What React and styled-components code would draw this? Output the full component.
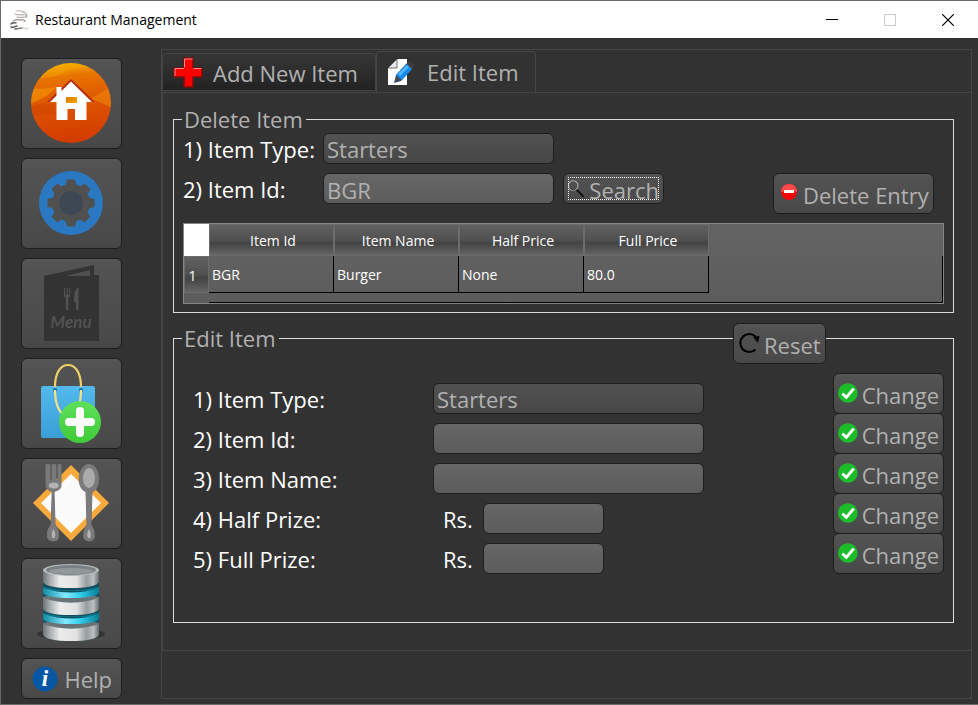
import React from 'react';
import styled, { createGlobalStyle, css } from 'styled-components';

const GlobalStyle = createGlobalStyle`
  * { box-sizing: border-box; }
  body { margin: 0; background: #323232; }
  button, input, select { font: inherit; color: inherit; }
`;

const raised = css`
  background: linear-gradient(#565656, #525252 10%, #4e4e4e 50%, #4a4a4a 90%, #464646);
  border: 1px solid #1e1e1e;
  border-radius: 6px;
`;

const AppWindow = styled.div`
  min-height: 100vh;
  display: flex;
  flex-direction: column;
  background: #323232;
  border: 1px solid #6a6a6a;
  border-right: 0;
  color: #b1b1b1;
  font: 22px/30px "Open Sans", "Noto Sans", sans-serif;
`;

const TitleBar = styled.header`
  height: 37px;
  flex: none;
  display: flex;
  align-items: center;
  padding: 0 1px 0 8px;
  background: #fff;
  color: #000;
`;

const Title = styled.h1`
  margin: 0 auto 0 4px;
  font-size: 14px;
  font-weight: 400;
  line-height: 20px;
`;

const WindowButton = styled.button`
  width: 58px;
  height: 36px;
  padding: 0;
  border: 0;
  background: none;
  display: grid;
  place-items: center;
`;

const Body = styled.div`
  flex: 1;
  display: flex;
  gap: 39px;
  padding: 11px 6px 5px 20px;
`;

const Sidebar = styled.nav`
  width: 101px;
  flex: none;
  display: flex;
  flex-direction: column;
  gap: 9px;
  padding-top: 9px;
`;

const NavButton = styled.button`
  ${raised}
  height: 91px;
  padding: 0 2px 2px 0;
  display: grid;
  place-items: center;
`;

const HelpButton = styled.button`
  ${raised}
  height: 41px;
  padding: 0 9px 0 10px;
  display: flex;
  align-items: center;
  justify-content: space-between;
  line-height: 38px;
`;

const HelpText = styled.span`
  padding-top: 1px;
`;

const Frame = styled.main`
  flex: 1;
  min-width: 0;
  border: 1px solid #444;
`;

const TabList = styled.div`
  display: flex;
  align-items: flex-end;
  height: 42px;
`;

const Tab = styled.button`
  height: ${p => (p.$active ? 41 : 38)}px;
  width: ${p => (p.$active ? 160 : 214)}px;
  margin-bottom: ${p => (p.$active ? 0 : 1)}px;
  padding: 0 0 0 ${p => (p.$active ? 10 : 9)}px;
  display: flex;
  align-items: center;
  gap: ${p => (p.$active ? 12 : 9)}px;
  border: 1px solid #444;
  border-bottom-width: ${p => (p.$active ? 0 : 1)}px;
  border-radius: 4px 4px 0 0;
  background: ${p => (p.$active ? '#323232' : 'linear-gradient(#343434, #323232 20%, #292929 70%, #212121)')};
  white-space: nowrap;
`;

const TabText = styled.span`
  padding-top: ${p => (p.$active ? 0 : 2)}px;
`;

const Pane = styled.section`
  border: 1px solid #444;
  border-right: 0;
  padding: 13px 17px 27px 10px;
  display: flex;
  flex-direction: column;
  gap: 12px;
`;

const Group = styled.fieldset`
  position: relative;
  min-width: 0;
  margin: 0;
  border: 1px solid #dcdcdc;
  padding: 0 9px ${p => (p.$roomy ? 49 : 8)}px;
`;

const Legend = styled.legend`
  margin: 0 0 0 -1px;
  padding: 0 3px 0 2px;
  line-height: 26px;
`;

const Lookup = styled.div`
  display: flex;
  align-items: flex-start;
  height: ${p => (p.$last ? 51 : 40)}px;
  padding-top: 1px;
`;

const Label = styled.label`
  width: ${p => (p.$wide ? 240 : 140)}px;
  flex: none;
  color: #fff;
  line-height: 32px;
  height: 31px;
  white-space: nowrap;
`;

const fieldBox = css`
  width: ${p => p.$width}px;
  height: 31px;
  border: 1px solid #1e1e1e;
  border-radius: 6px;
  line-height: 28px;
`;

const TextField = styled.input`
  ${fieldBox}
  padding: 2px 3px 0;
  background: linear-gradient(#666, #5c5c5c);
`;

const TypeSelect = styled.select`
  ${fieldBox}
  appearance: none;
  padding: 0 3px;
  background: linear-gradient(#525252, #464646);
  opacity: 1;
`;

const ActionButton = styled.button`
  ${raised}
  height: ${p => (p.$short ? 31 : 41)}px;
  width: ${p => p.$width}px;
  margin-left: ${p => (p.$push ? 'auto' : p.$near ? '9px' : 0)};
  margin-right: ${p => (p.$inset ? 10 : 0)}px;
  padding: 0 4px;
  display: flex;
  align-items: center;
  flex: none;
`;

const ActionBody = styled.span`
  flex: 1;
  min-width: 0;
  display: flex;
  align-items: center;
  gap: ${p => p.$gap || 4}px;
  overflow: hidden;
  white-space: nowrap;
  padding-left: ${p => p.$indent || 0}px;
  height: ${p => (p.$focused ? '23px' : '100%')};
  outline: ${p => (p.$focused ? '1px dotted #fff' : 'none')};
  outline-offset: -1px;
`;

const ActionText = styled.span`
  padding-top: 2px;
`;

const ResetSlot = styled.div`
  position: absolute;
  right: 127px;
  top: -28px;
`;

const EditRows = styled.div`
  margin-top: 22px;
  padding-left: 10px;
`;

const EditRow = styled.div`
  display: flex;
  height: 40px;
  align-items: flex-end;

  & > ${ActionButton}, & > ${Label}, & > input, & > select { margin-bottom: -1px; }
`;

const Currency = styled.span`
  width: 50px;
  padding-left: 10px;
  margin-bottom: -1px;
  height: 31px;
  line-height: 32px;
  color: #fff;
`;

const Results = styled.table`
  width: 100%;
  table-layout: fixed;
  border: 1px solid #85858a;
  border-spacing: 0;
  background: linear-gradient(#646464, #5c5c5c);
  color: #fff;
  font-size: 14px;
  line-height: 20px;
`;

const Col = styled.col`
  width: ${p => (p.$width ? p.$width + 'px' : 'auto')};
`;

const headFill = 'linear-gradient(#616161, #505050 50%, #434343 60%, #656565)';

const ColumnHead = styled.th`
  height: 32px;
  padding: 2px 0 0 3px;
  font-weight: 400;
  background: ${headFill};
  border: 1px solid #6c6c6c;
`;

const Corner = styled.td`
  padding: 0;
  background: #fff;
`;

const Blank = styled.td`
  padding: 0;
  border-right: ${p => (p.$edge ? '1px solid #000' : 0)};
  border-bottom: ${p => (p.$floor ? '1px solid #000' : 0)};
  height: ${p => (p.$floor ? 10 : 32)}px;
`;

const RowHead = styled.th`
  height: 37px;
  padding: 2px 8px 0 0;
  font-weight: 400;
  background: ${headFill};
  border: 1px solid #6c6c6c;
`;

const Cell = styled.td`
  height: 37px;
  padding: 2px 3px 0;
  border-right: 1px solid #000;
  border-bottom: 1px solid #000;
`;

/* ---------- icons ---------- */

const Logo = () => (
  <svg width="22" height="22" viewBox="0 0 22 22" fill="none" stroke="#5a544e" strokeLinecap="round" aria-hidden="true">
    <path d="M7 2c3-1 7 0 9 2M13 3c4-1 6 2 4 5" strokeWidth="1" stroke="#b9b4ae" />
    <path d="M6 5c4 2 8 0 12 1M8 8c3 1 7 0 10 0" strokeWidth="1" stroke="#a29d97" />
    <path d="M4 12c2-2 6-1 9-1 3-1 4 1 2 2" strokeWidth="1" stroke="#77716b" />
    <path d="M2 15c2-2 4-1 5-1M2 18c3 1 4-1 6-1M6 20c3 0 5-1 7-1" strokeWidth="1.400" />
    <path d="M9 19c3-1 6 0 10 1" stroke="#c8c4c0" />
  </svg>
);

const HomeIcon = () => (
  <svg width="82" height="82" viewBox="0 0 82 82" aria-hidden="true">
    <defs>
      <linearGradient id="homeBg" x1="0.4" y1="0" x2="0.5" y2="1">
        <stop offset="0" stopColor="#f6b800" />
        <stop offset="0.16" stopColor="#e87500" />
        <stop offset="0.5" stopColor="#dd5500" />
        <stop offset="1" stopColor="#d23a00" />
      </linearGradient>
      <linearGradient id="homeWin" x1="0" y1="0" x2="1" y2="1">
        <stop offset="0" stopColor="#dc7800" />
        <stop offset="1" stopColor="#f7a800" />
      </linearGradient>
      <clipPath id="homeClip"><circle cx="41" cy="41" r="40" /></clipPath>
    </defs>
    <circle cx="41" cy="41" r="40" fill="url(#homeBg)" />
    <g clipPath="url(#homeClip)">
      <path d="M6 16q20 1 32-8 10-4 24-3l-14-6H20z" fill="#f5a300" opacity=".45" />
      <path d="M0 26q14 2 26-1-6 9-26 17z" fill="#f39200" opacity=".65" />
      <path d="M60 37l24-14v24q-13-7-24-10z" fill="#f0900a" opacity=".5" />
      <path d="M0 45q14-6 25-2v9q-14 0-25 3z" fill="#c73b00" opacity=".35" />
    </g>
    <path d="M41 17l24 23h-5L41 22 22 40h-5l10-10z" fill="#b52c04" />
    <path d="M41 19.500L62 40h-5.500v18H45V47h-7.500v11h-11V40H20l6.500-6.500V25h5v4z" fill="#fff" />
    <rect x="36" y="35" width="11" height="6" fill="url(#homeWin)" />
  </svg>
);

const teeth = [0, 45, 90, 135, 180, 225, 270, 315];

const GearIcon = () => (
  <svg width="66" height="66" viewBox="0 0 66 66" aria-hidden="true">
    <circle cx="33" cy="33" r="32" fill="#2b78c2" />
    <circle cx="33" cy="33" r="19" fill="#505050" />
    {teeth.map(a => (
      <path key={a} d="M27 18l2-8.500h8l2 8.500z" fill="#505050" transform={'rotate(' + a + ' 33 33)'} />
    ))}
    <circle cx="33" cy="33" r="12" fill="#3e4854" />
  </svg>
);

const MenuIcon = () => (
  <svg width="58" height="78" viewBox="0 0 58 78" aria-hidden="true">
    <path d="M2 12L52 1v10h5v66H2z" fill="#333" />
    <path d="M24 12l24-6v6z" fill="#505050" />
    <path d="M22 24v7q0 2 1.800 2.500V46h2.600V33.500q1.800-.5 1.800-2.500v-7h-1v7h-1.300v-7h-1.300v7h-1.500v-7z" fill="#525252" />
    <path d="M36.500 23.500v22.500h-2.500V38h-2q0-13 4.500-14.500z" fill="#525252" />
    <text x="29" y="64" textAnchor="middle" fill="#525252" fontFamily="Lato, sans-serif" fontSize="17" fontStyle="italic" fontWeight="700">Menu</text>
  </svg>
);

const BagIcon = () => (
  <svg width="62" height="82" viewBox="0 0 62 82" aria-hidden="true">
    <defs>
      <linearGradient id="bagFill" x1="0" y1="0" x2="0" y2="1">
        <stop offset="0" stopColor="#54b9ec" /><stop offset="1" stopColor="#3a9fd6" />
      </linearGradient>
      <linearGradient id="plusFill" x1="0" y1="0" x2="0" y2="1">
        <stop offset="0" stopColor="#5ee05a" /><stop offset="1" stopColor="#3fcb38" />
      </linearGradient>
    </defs>
    <rect x="1" y="24" width="54" height="52" rx="2" fill="url(#bagFill)" />
    <path d="M15 25C15 10 21 3 28 3s13 7 13 22" fill="none" stroke="#f0d264" strokeWidth="2.200" />
    <circle cx="15" cy="28" r="2" fill="#1d6fa5" /><circle cx="41" cy="28" r="2" fill="#1d6fa5" />
    <path d="M15 28q0 22 13 28 13-6 13-28" fill="none" stroke="#f8e08a" strokeWidth="2.200" />
    <circle cx="40" cy="60" r="21" fill="url(#plusFill)" />
    <path d="M40 49v22M29 60h22" stroke="#fff" strokeWidth="8" strokeLinecap="round" />
  </svg>
);

const CutleryIcon = () => (
  <svg width="78" height="80" viewBox="0 0 78 80" aria-hidden="true">
    <path d="M39 2l38 38-38 38L1 40z" fill="#faa93c" />
    <path d="M39 11l30 29-30 30L9 40z" fill="#fbfbfb" />
    <path d="M14 1.500v21q0 4 5 5.500l1.200 1-1 32q-5 7-4 13 1 4 6 4t5.500-4q1-6-3.700-13l-1-32 1.500-1q5.500-1.500 5.500-5.500v-21h-3v16h-2v-16h-4v16h-2v-16z" fill="#7b7b7b" stroke="#747474" />
    <path d="M17 21q5-3 9.500 0v3q-4 3-9.500 0zM21.500 66q-3 5-1 9h2q2-4-1-9z" fill="#b4b4b4" />
    <path d="M57 1.500c-12 0-13 25-3 27l1 33q-4 6-3.500 12 1 4.500 5.500 4.500t5.500-4.500q.5-6-3.500-12l1-33c10-2 9-27-3-27z" fill="#7b7b7b" stroke="#747474" />
    <ellipse cx="57" cy="15" rx="6" ry="10" fill="#ababab" />
    <path d="M57 66q-3 5-1 9h2q2-4-1-9z" fill="#b4b4b4" />
  </svg>
);

const DatabaseIcon = () => (
  <svg width="70" height="80" viewBox="0 0 70 80" aria-hidden="true">
    <defs>
      <linearGradient id="steel">
        <stop offset="0" stopColor="#6d7476" /><stop offset=".12" stopColor="#a6abad" />
        <stop offset=".3" stopColor="#ededed" /><stop offset=".6" stopColor="#e2e2e2" />
        <stop offset=".78" stopColor="#969d9f" /><stop offset=".9" stopColor="#bbc0c1" />
        <stop offset="1" stopColor="#676d6f" />
      </linearGradient>
      <linearGradient id="cyan">
        <stop offset="0" stopColor="#118ba4" /><stop offset=".4" stopColor="#82ebff" />
        <stop offset=".65" stopColor="#35cfee" /><stop offset="1" stopColor="#067f96" />
      </linearGradient>
    </defs>
    <ellipse cx="35" cy="71" rx="34" ry="6" fill="#333" />
    <path d="M7 8v62q0 8 28 8t28-8V8z" fill="#14515e" />
    {[8, 35, 61].map(y => (
      <g key={y}>
        <path d={'M7 ' + (y - 1) + 'q28-8 56 0v5H7z'} fill="#6a7375" />
        <path d={'M7 ' + y + 'q28 9 56 0v11q-4 6-28 6t-28-6z'} fill="url(#steel)" />
      </g>
    ))}
    {[25, 51].map(y => (
      <g key={y}>
        <path d={'M7 ' + (y - 1) + 'q28 7 56 0v4H7z'} fill="#07778d" />
        <path d={'M7 ' + y + 'q28 9 56 0v5q-4 5-28 5t-28-5z'} fill="url(#cyan)" />
      </g>
    ))}
    <ellipse cx="35" cy="7" rx="28" ry="6" fill="#b8bcbd" />
    <ellipse cx="35" cy="7" rx="25" ry="5" fill="#788083" />
    <ellipse cx="35" cy="8" rx="22" ry="3" fill="#92999b" />
  </svg>
);

const InfoIcon = () => (
  <svg width="26" height="26" viewBox="0 0 26 26" aria-hidden="true">
    <circle cx="13" cy="13" r="12.500" fill="#0757a5" />
    <text x="13" y="20" textAnchor="middle" fill="#fff" fontFamily="Liberation Serif, serif" fontSize="23" fontStyle="italic" fontWeight="700">i</text>
  </svg>
);

const CrossIcon = () => (
  <svg width="32" height="32" viewBox="0 0 32 32" aria-hidden="true">
    <path d="M12 2h9v10h9v9h-9v10h-9V21H2v-9h10z" fill="#f00" stroke="#7b0d0d" strokeWidth="1.500" />
    <path d="M12.500 11.500V3h8M3 20v-7.500h9M21.500 12.500h8" fill="none" stroke="#ff8a8a" strokeWidth="1" />
  </svg>
);

const EditIcon = () => (
  <svg width="28" height="28" viewBox="0 0 28 28" aria-hidden="true">
    <path d="M10 1h10v26H1V10z" fill="#fff" />
    <path d="M10 1v9H1z" fill="#e8e8e8" stroke="#333" strokeWidth=".7" />
    <path d="M9 17l-2 8 7-2 12-13-5-6z" fill="#3b4c5c" />
    <path d="M9 17L19 6l6 5-10 11z" fill="#168cf0" />
    <path d="M11 16L20 7l2 2-9 9z" fill="#55b7ff" />
    <path d="M20 5l2-2 5 4-2 3z" fill="#3d3d3d" />
  </svg>
);

const SearchIcon = () => (
  <svg width="20" height="21" viewBox="0 0 20 21" fill="none" aria-hidden="true">
    <path d="M10 12l8 8" stroke="#0a0a0a" strokeWidth="2" />
    <circle cx="6" cy="7" r="5.500" stroke="#b5b5b5" strokeWidth="1.200" />
    <path d="M2 10q4 4 8 0" stroke="#333" />
  </svg>
);

const DeleteIcon = () => (
  <svg width="16" height="20" viewBox="0 0 16 20" aria-hidden="true">
    <circle cx="8" cy="8" r="8" fill="#f00808" />
    <path d="M0 8a8 8 0 0 1 16 0q-8-3-16 0z" fill="#ff4a4a" />
    <rect x="3" y="6" width="10" height="3" fill="#fff" />
  </svg>
);

const ResetIcon = () => (
  <svg width="21" height="23" viewBox="0 0 21 23" aria-hidden="true">
    <path d="M16.500 17.500A9 9 0 1 1 17 5" fill="none" stroke="#000" strokeWidth="2.200" />
    <path d="M14 5l6.500-1-1.500 7z" fill="#000" />
  </svg>
);

const TickIcon = () => (
  <svg width="20" height="22" viewBox="0 0 20 22" aria-hidden="true">
    <circle cx="10" cy="10" r="10" fill="#1bbd2b" />
    <path d="M4.500 10.500l4 4L16 5.500" fill="none" stroke="#fff" strokeWidth="3" />
  </svg>
);

/* ---------- screen ---------- */

const sections = [
  ['Home', HomeIcon], ['Settings', GearIcon], ['Menu', MenuIcon],
  ['New order', BagIcon], ['Tables', CutleryIcon], ['Database', DatabaseIcon],
];

const columns = ['Item Id', 'Item Name', 'Half Price', 'Full Price'];
const items = [['BGR', 'Burger', 'None', '80.0']];

const editFields = [
  { id: 'type', label: '1) Item Type:', kind: 'select' },
  { id: 'id', label: '2) Item Id:' },
  { id: 'name', label: '3) Item Name:' },
  { id: 'half', label: '4) Half Prize:', kind: 'money' },
  { id: 'full', label: '5) Full Prize:', kind: 'money' },
];

function EditField({ id, label, kind }) {
  const fieldId = 'edit-' + id;
  return (
    <EditRow>
      <Label $wide htmlFor={fieldId}>{label}</Label>
      {kind === 'money' && <Currency>Rs.</Currency>}
      {kind === 'select'
        ? <TypeSelect id={fieldId} $width={271}><option>Starters</option></TypeSelect>
        : <TextField id={fieldId} $width={kind === 'money' ? 121 : 271} />}
      <ActionButton $push $width={111}>
        <ActionBody><TickIcon /><ActionText>Change</ActionText></ActionBody>
      </ActionButton>
    </EditRow>
  );
}

export default function App() {
  return (
    <AppWindow>
      <GlobalStyle />
      <TitleBar>
        <Logo />
        <Title>Restaurant Management</Title>
        <WindowButton aria-label="Minimize">
          <svg width="12" height="12"><path d="M0 5.500h12" stroke="#000" /></svg>
        </WindowButton>
        <WindowButton aria-label="Maximize" disabled>
          <svg width="12" height="12"><rect x=".5" y=".5" width="11" height="11" fill="none" stroke="#ccc" /></svg>
        </WindowButton>
        <WindowButton aria-label="Close">
          <svg width="12" height="12"><path d="M0 0l12 12M12 0L0 12" stroke="#000" strokeWidth="1.200" /></svg>
        </WindowButton>
      </TitleBar>

      <Body>
        <Sidebar>
          {sections.map(([name, Icon]) => (
            <NavButton key={name} aria-label={name}><Icon /></NavButton>
          ))}
          <HelpButton><InfoIcon /><HelpText>Help</HelpText></HelpButton>
        </Sidebar>

        <Frame>
          <TabList role="tablist">
            <Tab role="tab" aria-selected="false"><CrossIcon /><TabText>Add New Item</TabText></Tab>
            <Tab role="tab" aria-selected="true" $active><EditIcon /><TabText $active>Edit Item</TabText></Tab>
          </TabList>

          <Pane role="tabpanel">
            <Group>
              <Legend>Delete Item</Legend>
              <Lookup>
                <Label htmlFor="find-type">1) Item Type:</Label>
                <TypeSelect id="find-type" $width={231}><option>Starters</option></TypeSelect>
              </Lookup>
              <Lookup $last>
                <Label htmlFor="find-id">2) Item Id:</Label>
                <TextField id="find-id" $width={231} defaultValue="BGR" />
                <ActionButton $short $near $width={101}>
                  <ActionBody $focused><SearchIcon /><ActionText>Search</ActionText></ActionBody>
                </ActionButton>
                <ActionButton $push $inset $width={161}>
                  <ActionBody $indent={3} $gap={6}><DeleteIcon /><ActionText>Delete Entry</ActionText></ActionBody>
                </ActionButton>
              </Lookup>
              <Results>
                <colgroup>
                  <Col $width={25} />
                  {columns.map(c => <Col key={c} $width={125} />)}
                  <Col />
                </colgroup>
                <thead>
                  <tr>
                    <Corner />
                    {columns.map(c => <ColumnHead key={c} scope="col">{c}</ColumnHead>)}
                    <Blank />
                  </tr>
                </thead>
                <tbody>
                  {items.map((item, i) => (
                    <tr key={item[0]}>
                      <RowHead scope="row">{i + 1}</RowHead>
                      {item.map((v, n) => <Cell key={columns[n]}>{v}</Cell>)}
                      <Blank $edge />
                    </tr>
                  ))}
                  <tr>
                    <td />
                    <Blank $edge $floor colSpan={5} />
                  </tr>
                </tbody>
              </Results>
            </Group>

            <Group $roomy>
              <Legend>Edit Item</Legend>
              <ResetSlot>
                <ActionButton $width={93}>
                  <ActionBody $indent={1}><ResetIcon /><ActionText>Reset</ActionText></ActionBody>
                </ActionButton>
              </ResetSlot>
              <EditRows>
                {editFields.map(f => <EditField key={f.id} {...f} />)}
              </EditRows>
            </Group>
          </Pane>
        </Frame>
      </Body>
    </AppWindow>
  );
}
